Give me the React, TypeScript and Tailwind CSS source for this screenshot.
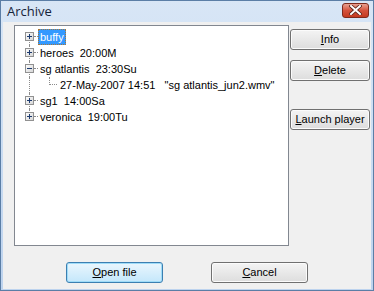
import React from 'react';

type Node = { label: string; expanded?: boolean; selected?: boolean; children?: string[] };

const nodes: Node[] = [
  { label: 'buffy', selected: true },
  { label: 'heroes  20:00M' },
  { label: 'sg atlantis  23:30Su', expanded: true, children: ['27-May-2007 14:51   "sg atlantis_jun2.wmv"'] },
  { label: 'sg1  14:00Sa' },
  { label: 'veronica  19:00Tu' },
];

function ExpandBox({ open }: { open?: boolean }) {
  return (
    <svg width="9" height="9" viewBox="0 0 9 9" className="absolute left-[10px] top-[3px]">
      <defs>
        <linearGradient id="bx" x1="0" y1="0" x2="1" y2="1">
          <stop offset="0" stopColor="#ffffff" />
          <stop offset="1" stopColor="#d4d4d4" />
        </linearGradient>
      </defs>
      <rect x="0.5" y="0.5" width="8" height="8" fill="url(#bx)" stroke="#919191" />
      <rect x="2" y="4" width="5" height="1" fill="#1c3a6e" />
      {!open && <rect x="4" y="2" width="1" height="5" fill="#1c3a6e" />}
    </svg>
  );
}

function Btn({ children, primary, className = '' }: { children: React.ReactNode; primary?: boolean; className?: string }) {
  return (
    <button
      className={
        'h-[21px] rounded-[3px] border text-[11px] text-black leading-none ' +
        (primary
          ? 'border-[#3c7fb1] bg-gradient-to-b from-[#eaf6fd] to-[#c4e7fb] shadow-[inset_0_0_0_1px_#9fdcf8] '
          : 'border-[#707070] bg-gradient-to-b from-[#f4f4f4] to-[#dddddd] shadow-[inset_0_0_0_1px_#fbfbfb] ') +
        className
      }
    >
      {children}
    </button>
  );
}

export default function App() {
  return (
    <div
      className="w-[374px] h-[291px] flex flex-col border border-[#5b7ea6] bg-gradient-to-b from-[#d8e6f6] to-[#bdd3ee]"
      style={{ fontFamily: '"Liberation Sans", Arial, sans-serif' }}
    >
      {/* Title bar */}
      <div className="h-[21px] flex items-center justify-between pl-[6px] pr-[4px] shrink-0">
        <span className="text-[13px] text-[#15243a]" style={{ fontFamily: '"Open Sans", "Noto Sans", sans-serif' }}>
          Archive
        </span>
        <div className="w-[27px] h-[15px] mt-[-3px] rounded-[3px] border border-[#7e2a1c] bg-gradient-to-b from-[#e8a090] via-[#d4523c] to-[#c43a20] flex items-center justify-center">
          <svg width="13" height="10" viewBox="0 0 13 10">
            <path d="M2 1 L11 9 M11 1 L2 9" stroke="#5a2318" strokeWidth="3.6" strokeLinecap="square" />
            <path d="M2 1 L11 9 M11 1 L2 9" stroke="#ffffff" strokeWidth="2" strokeLinecap="square" />
          </svg>
        </div>
      </div>

      {/* Client area */}
      <div className="flex-1 mx-[2px] mb-[2px] bg-[#f0f0f0] flex flex-col pt-[3px] pb-[6px]">
        <div className="flex pl-[11px] pr-[1px] gap-[1px]">
          <div className="w-[275px] h-[221px] border border-[#828790] bg-white pt-[3px] text-[11px] text-black">
            {nodes.map((n, i) => {
              const first = i === 0;
              const last = i === nodes.length - 1;
              return (
                <React.Fragment key={n.label}>
                  <div className="flex h-4 items-center">
                    <div className="relative w-[23px] h-4 shrink-0">
                      <div
                        className={
                          'absolute left-[14px] w-0 border-l border-dotted border-[#8c8c8c] ' +
                          (first ? 'top-[8px] bottom-0' : last ? 'top-0 h-[8px]' : 'top-0 bottom-0')
                        }
                      />
                      <div className="absolute left-[19px] top-[7px] w-[4px] h-0 border-t border-dotted border-[#8c8c8c]" />
                      <ExpandBox open={n.expanded} />
                    </div>
                    <span
                      className={
                        'whitespace-pre px-[1px] h-[16px] leading-[14px] border border-dotted ' +
                        (n.selected ? 'bg-[#3399ff] text-white border-[#a87636]' : 'border-transparent')
                      }
                    >
                      {n.label}
                    </span>
                  </div>
                  {n.children?.map((c) => (
                    <div key={c} className="flex h-4 items-center">
                      <div className="relative w-[23px] h-4 shrink-0">
                        <div className="absolute left-[14px] top-0 bottom-0 w-0 border-l border-dotted border-[#8c8c8c]" />
                      </div>
                      <div className="relative w-[20px] h-4 shrink-0">
                        <div className="absolute left-[11px] top-0 h-[8px] w-0 border-l border-dotted border-[#8c8c8c]" />
                        <div className="absolute left-[12px] top-[7px] w-[7px] h-0 border-t border-dotted border-[#8c8c8c]" />
                      </div>
                      <span className="whitespace-pre px-[2px]">{c}</span>
                    </div>
                  ))}
                </React.Fragment>
              );
            })}
          </div>

          <div className="w-[80px] flex flex-col pt-[4px]">
            <Btn><span className="underline">I</span>nfo</Btn>
            <Btn className="mt-[10px]"><span className="underline">D</span>elete</Btn>
            <Btn className="mt-[28px]"><span className="underline">L</span>aunch player</Btn>
          </div>
        </div>

        <div className="flex justify-center gap-[48px] mt-[16px]">
          <Btn primary className="w-[97px]"><span className="underline">O</span>pen file</Btn>
          <Btn className="w-[97px]"><span className="underline">C</span>ancel</Btn>
        </div>
      </div>
    </div>
  );
}
